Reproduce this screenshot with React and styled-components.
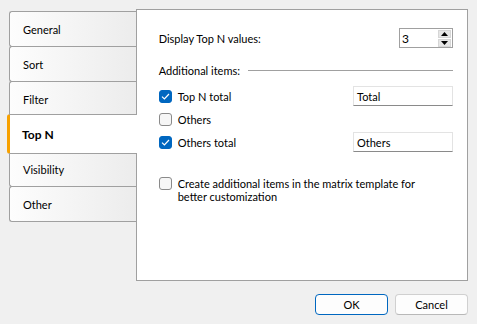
import React from "react";
import styled, { createGlobalStyle } from "styled-components";

const Global = createGlobalStyle`
  html, body { margin: 0; padding: 0; background: #f0f0f0; }
  body { font-family: Lato, "Liberation Sans", sans-serif; font-size: 11px; color: #000; }
  * { box-sizing: border-box; }
`;

const Window = styled.div`
  width: 477px;
  height: 324px;
  background: #f0f0f0;
  padding: 9px 9px 0 7px;
  display: flex;
  flex-direction: column;
`;

const Main = styled.div`
  display: flex;
  align-items: flex-start;
`;

const TabColumn = styled.div`
  width: 129px;
  padding-top: 3px;
  display: flex;
  flex-direction: column;
  position: relative;
  z-index: 1;
`;

const Tab = styled.div`
  position: relative;
  height: ${(p) => (p.$active ? 40 : 36)}px;
  margin-top: ${(p) => (p.$active ? -3 : -1)}px;
  margin-bottom: ${(p) => (p.$active ? -2 : 0)}px;
  margin-left: ${(p) => (p.$active ? 0 : 2)}px;
  margin-right: ${(p) => (p.$active ? -1 : 0)}px;
  border: 1px solid #a0a0a0;
  border-right: none;
  border-left: ${(p) => (p.$active ? "3px solid #f7a100" : "1px solid #a0a0a0")};
  border-radius: 3px 0 0 3px;
  background: ${(p) => (p.$active ? "#ffffff" : "linear-gradient(to right, #fdfdfd, #ececec)")};
  z-index: ${(p) => (p.$active ? 2 : 1)};
  display: flex;
  align-items: center;
  padding-left: ${(p) => (p.$active ? 12 : 13)}px;
  font-weight: ${(p) => (p.$active ? 700 : 400)};
  font-size: ${(p) => (p.$active ? 12 : 11)}px;
`;

const Panel = styled.div`
  width: 333px;
  height: 272px;
  background: #fff;
  border: 1px solid #a0a0a0;
  padding: 18px 14px 0 22px;
  display: flex;
  flex-direction: column;
`;

const Row = styled.div`
  display: flex;
  align-items: center;
  justify-content: space-between;
  height: ${(p) => p.$h || 20}px;
  margin-top: ${(p) => p.$mt || 0}px;
`;

const SpinBox = styled.div`
  width: 54px;
  height: 20px;
  border: 1px solid #a0a0a0;
  background: #fff;
  display: flex;
  align-items: center;
  justify-content: space-between;
  padding: 0 1px 0 2px;
  font-size: 12px;
`;

const SpinButtons = styled.div`
  display: flex;
  flex-direction: column;
  gap: 1px;
`;

const SpinBtn = styled.div`
  width: 13px;
  height: 8px;
  background: #e6e6e6;
  border: 1px solid #d6d6d6;
  display: flex;
  align-items: center;
  justify-content: center;
`;

const Group = styled.div`
  display: flex;
  align-items: center;
  gap: 8px;
  height: 14px;
  margin-top: 15px;
`;

const GroupLine = styled.div`
  flex: 1;
  height: 1px;
  background: #a0a0a0;
`;

const CheckRow = styled.label`
  display: flex;
  align-items: ${(p) => (p.$top ? "flex-start" : "center")};
  gap: 6px;
  line-height: 13px;
`;

const Box = styled.span`
  flex: none;
  width: 13px;
  height: 13px;
  border-radius: 3px;
  border: 1px solid ${(p) => (p.$checked ? "#0067c0" : "#8a8a8a")};
  background: ${(p) => (p.$checked ? "#0067c0" : "#f6f6f6")};
  display: flex;
  align-items: center;
  justify-content: center;
`;

const TextBox = styled.div`
  width: 100px;
  height: 20px;
  border: 1px solid #e3e3e3;
  border-bottom-color: #8a8a8a;
  background: #fff;
  padding-left: 3px;
  display: flex;
  align-items: center;
`;

const Footer = styled.div`
  display: flex;
  justify-content: flex-end;
  gap: 7px;
  margin-top: 13px;
`;

const Button = styled.div`
  width: 73px;
  height: 21px;
  border-radius: 4px;
  background: #fdfdfd;
  border: 1px solid ${(p) => (p.$primary ? "#0067c0" : "#d0d0d0")};
  border-bottom-color: ${(p) => (p.$primary ? "#0067c0" : "#b8b8b8")};
  display: flex;
  align-items: center;
  justify-content: center;
`;

const Check = () => (
  <svg width="9" height="7" viewBox="0 0 9 7">
    <path d="M1 3.6 L3.4 6 L8 1" fill="none" stroke="#fff" strokeWidth="1.2" />
  </svg>
);

const Arrow = ({ down }) => (
  <svg width="7" height="4" viewBox="0 0 7 4">
    <path d={down ? "M0 0 H7 L3.5 4 Z" : "M0 4 H7 L3.5 0 Z"} fill="#000" />
  </svg>
);

const CheckItem = ({ checked, label, value, top, mt }) => (
  <Row $h={top ? 28 : 20} $mt={mt}>
    <CheckRow $top={top}>
      <Box $checked={checked}>{checked && <Check />}</Box>
      <span>{label}</span>
    </CheckRow>
    {value && <TextBox>{value}</TextBox>}
  </Row>
);

const tabs = ["General", "Sort", "Filter", "Top N", "Visibility", "Other"];

export default function App() {
  return (
    <Window>
      <Global />
      <Main>
        <TabColumn>
          {tabs.map((t) => (
            <Tab key={t} $active={t === "Top N"}>
              {t}
            </Tab>
          ))}
        </TabColumn>
        <Panel>
          <Row>
            <span>Display Top N values:</span>
            <SpinBox>
              <span>3</span>
              <SpinButtons>
                <SpinBtn><Arrow /></SpinBtn>
                <SpinBtn><Arrow down /></SpinBtn>
              </SpinButtons>
            </SpinBox>
          </Row>
          <Group>
            <span>Additional items:</span>
            <GroupLine />
          </Group>
          <CheckItem checked label="Top N total" value="Total" mt={9} />
          <CheckItem label="Others" mt={3} />
          <CheckItem checked label="Others total" value="Others" mt={3} />
          <CheckItem
            top
            mt={24}
            label={
              <>
                Create additional items in the matrix template for
                <br />
                better customization
              </>
            }
          />
        </Panel>
      </Main>
      <Footer>
        <Button $primary>OK</Button>
        <Button>Cancel</Button>
      </Footer>
    </Window>
  );
}
